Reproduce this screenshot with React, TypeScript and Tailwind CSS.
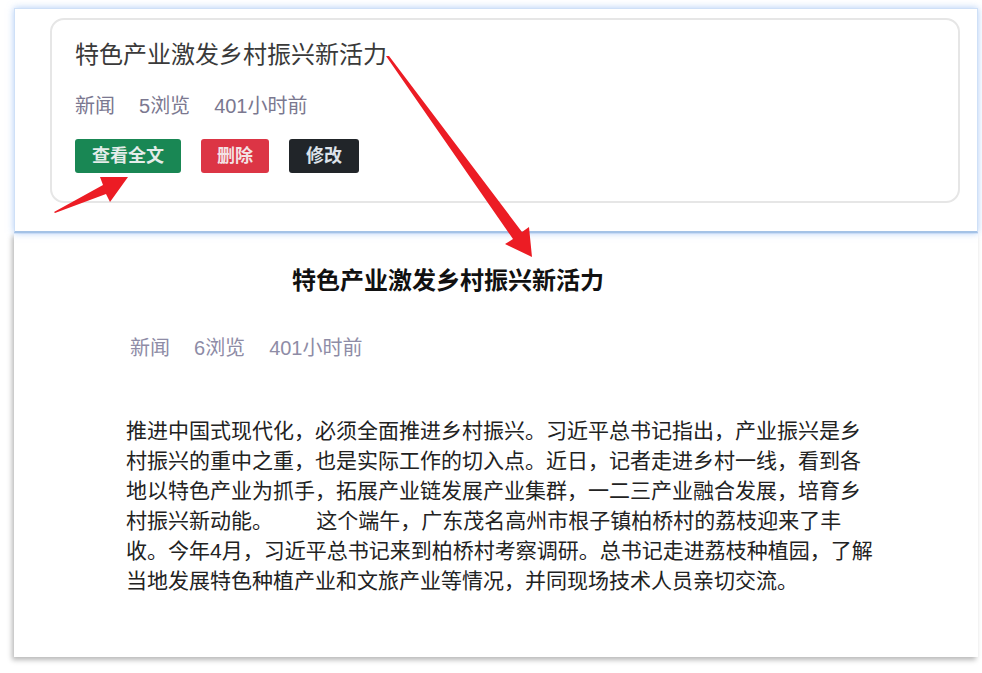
const font = { fontFamily: '"Liberation Sans", "Noto Sans CJK SC", sans-serif' };

const title = "特色产业激发乡村振兴新活力";

function Meta({ views, className }: { views: number; className: string }) {
  return (
    <div className={`flex gap-[24px] text-[20px] leading-[28px] ${className}`}>
      <span>新闻</span>
      <span>{views}浏览</span>
      <span>401小时前</span>
    </div>
  );
}

function Arrows() {
  // hand drawn red annotation arrows that sit over the screenshot
  return (
    <svg className="absolute inset-0 z-20 pointer-events-none" width="982" height="673" viewBox="0 0 982 673">
      <polygon
        fill="#ec1c24"
        points="54,212 103,185 100,177 128,177 110,202 106,194 55,213"
      />
      <polygon
        fill="#ec1c24"
        points="386,56 389,56 522,232 529,227 532,257 505,244 513,239"
      />
    </svg>
  );
}

export default function App() {
  return (
    <div className="relative w-[982px] h-[673px] bg-white overflow-hidden" style={font}>
      <div className="flex flex-col pt-[8px] pl-[14px] pr-[4px]">
        {/* list item panel */}
        <div className="h-[225px] bg-white border border-[#cfe0f7] border-b-2 border-b-[#a4c2e6] shadow-[0_0_7px_rgba(120,170,240,0.6)] pt-[9px] pl-[35px] pr-[17px] relative z-10">
          <div className="h-[185px] rounded-[14px] border-2 border-[#e6e6e6] pl-[23px] pt-[18px]">
            <h3 className="text-[24px] leading-[34px] text-[#3a3a3a]">{title}</h3>
            <Meta views={5} className="mt-[20px] text-[#7b7890]" />
            <div className="flex gap-[20px] mt-[19px]">
              <button className="h-[34px] px-[17px] rounded-[3px] bg-[#198754] text-[#e4ece9] text-[18px] font-bold">查看全文</button>
              <button className="h-[34px] px-[16px] rounded-[3px] bg-[#dc3545] text-[#f3e2e4] text-[18px] font-bold">删除</button>
              <button className="h-[34px] px-[17px] rounded-[3px] bg-[#212529] text-[#dde3ea] text-[18px] font-bold">修改</button>
            </div>
          </div>
        </div>

        {/* detail panel */}
        <div className="h-[424px] bg-white shadow-[-2px_3px_5px_rgba(0,0,0,0.28)] border-t border-[#e6eef9]">
          <h2 className="pl-[278px] pt-[30px] text-[24px] leading-[34px] font-bold text-[#111]">{title}</h2>
          <Meta views={6} className="pl-[116px] mt-[36px] text-[#8e8ca6]" />
          <p className="ml-[112px] mt-[54px] w-[750px] text-[21px] leading-[30px] text-[#222]">
            推进中国式现代化，必须全面推进乡村振兴。习近平总书记指出，产业振兴是乡村振兴的重中之重，也是实际工作的切入点。近日，记者走进乡村一线，看到各地以特色产业为抓手，拓展产业链发展产业集群，一二三产业融合发展，培育乡村振兴新动能。{"\u3000\u3000\u00a0 "}这个端午，广东茂名高州市根子镇柏桥村的荔枝迎来了丰收。今年4月，习近平总书记来到柏桥村考察调研。总书记走进荔枝种植园，了解当地发展特色种植产业和文旅产业等情况，并同现场技术人员亲切交流。
          </p>
        </div>
      </div>
      <Arrows />
    </div>
  );
}
